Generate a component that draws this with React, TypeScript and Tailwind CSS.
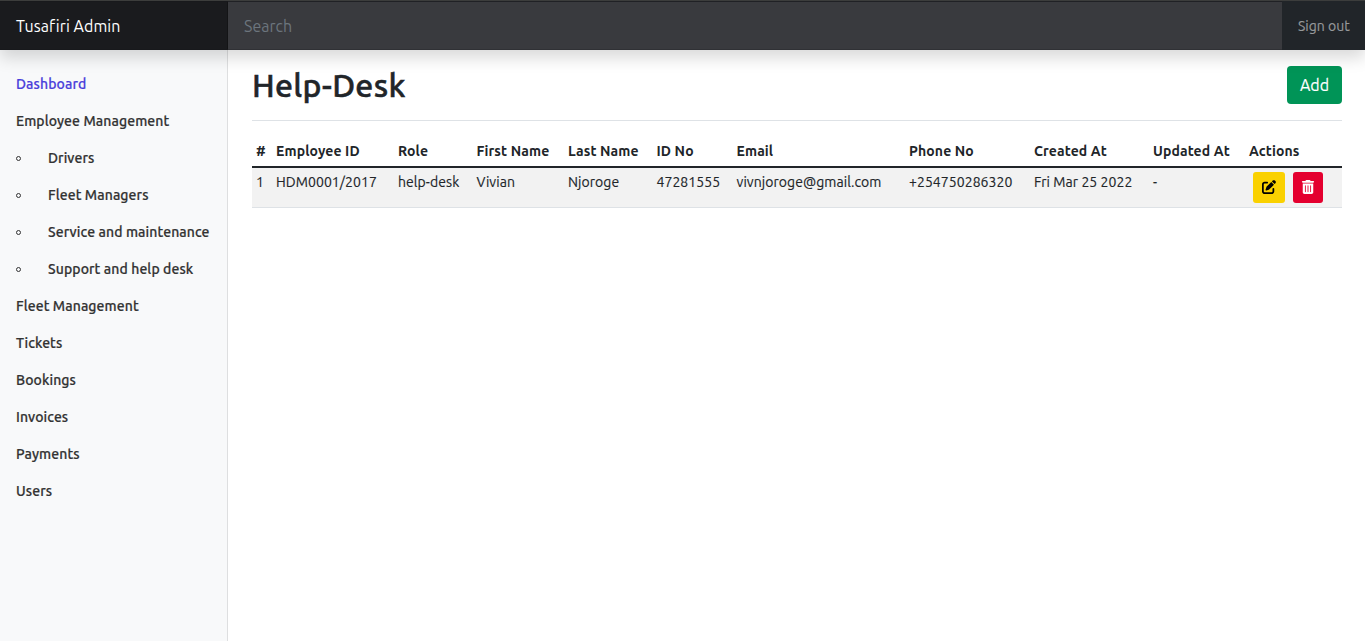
import { FaPenToSquare, FaTrashCan } from 'react-icons/fa6';

type Item = { label: string; sub?: boolean; active?: boolean };

const items: Item[] = [
  { label: 'Dashboard', active: true },
  { label: 'Employee Management' },
  { label: 'Drivers', sub: true },
  { label: 'Fleet Managers', sub: true },
  { label: 'Service and maintenance', sub: true },
  { label: 'Support and help desk', sub: true },
  { label: 'Fleet Management' },
  { label: 'Tickets' },
  { label: 'Bookings' },
  { label: 'Invoices' },
  { label: 'Payments' },
  { label: 'Users' },
];

const columns = [
  { head: '#', value: '1', width: 'w-[20px]' },
  { head: 'Employee ID', value: 'HDM0001/2017', width: 'w-[122px]' },
  { head: 'Role', value: 'help-desk', width: 'w-[78.5px]' },
  { head: 'First Name', value: 'Vivian', width: 'w-[91.5px]' },
  { head: 'Last Name', value: 'Njoroge', width: 'w-[88.5px]' },
  { head: 'ID No', value: '47281555', width: 'w-[80px]' },
  { head: 'Email', value: 'vivnjoroge@gmail.com', width: 'w-[172.5px]' },
  { head: 'Phone No', value: '+254750286320', width: 'w-[125px]' },
  { head: 'Created At', value: 'Fri Mar 25 2022', width: 'w-[119px]' },
  { head: 'Updated At', value: '-', width: 'w-[96px]' },
];

export default function App() {
  return (
    <div className="flex h-[641px] flex-col overflow-hidden bg-white font-['Ubuntu','Noto_Sans',sans-serif] text-[#212529]">
      <header className="relative z-10 flex h-[50px] shrink-0 border-t border-[#3c3d3c] bg-[#212529] shadow-[0_8px_16px_rgba(0,0,0,0.15)]">
        <div className="flex w-[228px] items-center border-y border-[#18191c] bg-[#1a1b1e] pl-4 text-base tracking-[0.07px] text-white shadow-[inset_-1px_0_0_rgba(0,0,0,0.25)]">
          <span>Tusafiri Admin</span>
        </div>
        <div className="flex grow items-center border-t border-b border-t-[#202125] border-b-[#303135] bg-[#393a3e] pl-4 text-base text-[#6c757d]">
          <span>Search</span>
        </div>
        <div className="flex w-[83px] items-center pl-4 text-sm text-[#97999b] [-webkit-text-stroke:0.15px]">
          <span>Sign out</span>
        </div>
      </header>
      <div className="flex grow">
        <nav className="w-[228px] shrink-0 bg-[#f8f9fa] pt-[15px] shadow-[inset_-1px_0_0_rgba(0,0,0,0.1)]">
          <ul>
            {items.map((it) => (
              <li key={it.label} className={`flex h-[37px] items-center pl-4 text-sm font-medium tracking-[0.1px] whitespace-nowrap [-webkit-text-stroke:0.2px] ${it.active ? 'text-[#4a3fdb]' : 'text-[#333333]'}`}>
                {it.sub && <span className="mt-[2px] mr-[27px] size-[5px] rounded-full border border-[#333]" />}
                <span>{it.label}</span>
              </li>
            ))}
          </ul>
        </nav>
        <main className="grow pt-4 pr-[23px] pl-6">
          <div className="flex h-[55px] items-start justify-between border-b border-[#dee2e6]">
            <h1 className="text-[32px] leading-[38px] font-medium tracking-[0.33px] [-webkit-text-stroke:0.5px]">Help-Desk</h1>
            <button className="h-[38px] w-[55px] rounded bg-[#009457] text-base text-white [-webkit-text-stroke:0.15px]">Add</button>
          </div>
          <table className="mt-[15px] w-[1090px] table-fixed border-collapse text-left text-sm leading-[21px] whitespace-nowrap">
            <thead>
              <tr className="h-[31px] border-b-2 border-[#212529]">
                {columns.map((c) => (
                  <th key={c.head} className={`px-1 font-bold tracking-[0.12px] ${c.width}`}>{c.head}</th>
                ))}
                <th className="px-1 font-bold tracking-[0.12px]">Actions</th>
              </tr>
            </thead>
            <tbody>
              <tr className="h-10 border-b border-[#dee2e6] bg-[#f2f2f2] align-top tracking-[0.06px] [-webkit-text-stroke:0.15px]">
                {columns.map((c) => (
                  <td key={c.head} className="px-1 pt-1">{c.value}</td>
                ))}
                <td className="px-1 pt-1">
                  <div className="flex gap-2 pl-1">
                    <button aria-label="Edit" className="flex h-[31px] w-8 items-center justify-center rounded-[3px] bg-[#fad100] pb-px text-sm text-black"><FaPenToSquare /></button>
                    <button aria-label="Delete" className="flex h-[31px] w-[30px] items-center justify-center rounded-[3px] bg-[#e4002f] pb-px text-sm text-white"><FaTrashCan /></button>
                  </div>
                </td>
              </tr>
            </tbody>
          </table>
        </main>
      </div>
    </div>
  );
}
